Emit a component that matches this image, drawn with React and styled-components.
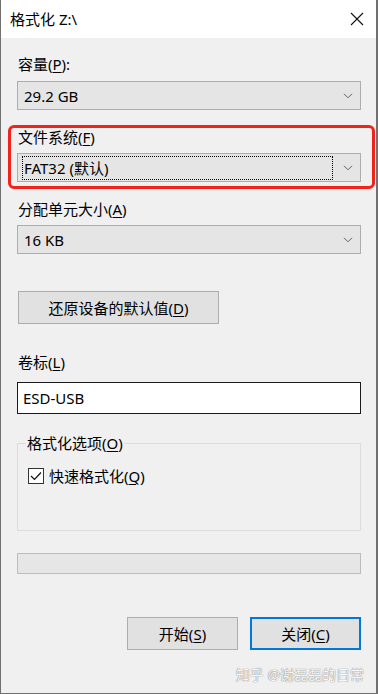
import React from "react";
import styled, { createGlobalStyle } from "styled-components";

const Global = createGlobalStyle`
  html, body { margin: 0; padding: 0; background: #f0f0f0; }
  body { font-family: "Noto Sans", "Noto Sans CJK SC", sans-serif; }
  * { box-sizing: border-box; }
`;

const Window = styled.div`
  width: 378px;
  height: 694px;
  display: flex;
  flex-direction: column;
  background: #f0f0f0;
  border-left: 1px solid #707070;
  border-right: 2px solid #707070;
  border-bottom: 1px solid #707070;
  color: #000;
  font-size: 15px;
  position: relative;
  overflow: hidden;
`;

const TitleBar = styled.div`
  height: 38px;
  flex: none;
  background: #fff;
  display: flex;
  align-items: center;
  justify-content: space-between;
  padding: 0 12px 0 9px;
`;

const Title = styled.div`
  font-size: 15px;
  line-height: 20px;
  margin-top: -1px;
`;

const CloseIcon = styled.svg`
  width: 14px;
  height: 14px;
  margin-top: 0px;
`;

const Body = styled.div`
  flex: 1;
  display: flex;
  flex-direction: column;
  padding: 0 15px 0 16px;
`;

const Label = styled.div`
  font-size: 15px;
  line-height: 20px;
  margin-top: ${(p) => p.$mt || 0}px;
  margin-left: ${(p) => p.$ml || 0}px;
`;

const U = styled.u`
  text-underline-offset: 2px;
  text-decoration-thickness: 1px;
`;

const Select = styled.div`
  margin-top: ${(p) => p.$mt || 0}px;
  height: 29px;
  background: #e5e5e5;
  border: 1px solid #adadad;
  display: flex;
  align-items: center;
  padding: 0 7px 0 4px;
  position: relative;
`;

const SelectText = styled.div`
  flex: 1;
  font-size: 15px;
  line-height: 20px;
  padding: 1px 0 1px 1px;
  height: 24px;
  display: flex;
  align-items: center;
  border: 1px dotted ${(p) => (p.$focus ? "#000" : "transparent")};
  margin-right: 10px;
`;

const Chevron = () => (
  <svg width="10" height="6" viewBox="0 0 10 6" style={{ flex: "none" }}>
    <polyline points="1,0.8 5,4.8 9,0.8" fill="none" stroke="#606060" strokeWidth="1" />
  </svg>
);

const Highlight = styled.div`
  position: relative;
  display: flex;
  flex-direction: column;
  margin-top: ${(p) => p.$mt || 0}px;
  &::after {
    content: "";
    position: absolute;
    left: -9px;
    right: -14px;
    top: -2px;
    bottom: -7px;
    border: 3px solid #f2231d;
    border-radius: 6px;
    pointer-events: none;
  }
`;

const Button = styled.button`
  font-family: inherit;
  font-size: 15px;
  color: #000;
  width: ${(p) => p.$w}px;
  height: 33px;
  background: #e1e1e1;
  border: ${(p) => (p.$default ? "2px solid #0078d7" : "1px solid #adadad")};
  padding: 0;
  margin: 0;
  line-height: 20px;
`;

const RestoreButton = styled(Button)`
  margin-top: 37px;
  margin-left: 1px;
  align-self: flex-start;
`;

const TextInput = styled.div`
  margin-top: 10px;
  height: 32px;
  background: #fff;
  border: 1px solid #1a1a1a;
  display: flex;
  align-items: center;
  padding: 0 5px;
  font-size: 15px;
`;

const GroupBox = styled.fieldset`
  margin: 19px 0 0 0;
  padding: 8px 10px 0 10px;
  height: 98px;
  border: 1px solid #dcdcdc;
  border-radius: 0;
  min-width: 0;
`;

const Legend = styled.legend`
  font-size: 15px;
  line-height: 20px;
  padding: 0 1px;
  margin-left: -2px;
`;

const CheckRow = styled.label`
  display: flex;
  align-items: center;
  gap: 5px;
  font-size: 15px;
  line-height: 20px;
  margin-top: 5px;
`;

const CheckBox = styled.span`
  width: 16px;
  height: 16px;
  border: 1px solid #333;
  background: #fff;
  display: flex;
  align-items: center;
  justify-content: center;
`;

const Progress = styled.div`
  margin-top: 22px;
  height: 21px;
  background: #e6e6e6;
  border: 1px solid #bcbcbc;
`;

const ButtonRow = styled.div`
  display: flex;
  justify-content: flex-end;
  gap: 12px;
  margin-top: 43px;
`;

const Watermark = styled.div`
  align-self: flex-end;
  margin-top: 16px;
  margin-right: -3px;
  font-size: 14px;
  line-height: 18px;
  color: #f6f6f6;
  text-shadow: 0 0 1px #8a8a8a, 0 0 1px #8a8a8a;
`;

export default function App() {
  return (
    <>
      <Global />
      <Window>
        <TitleBar>
          <Title>格式化 Z:\</Title>
          <CloseIcon viewBox="0 0 14 14">
            <path d="M1 1 L13 13 M13 1 L1 13" stroke="#111" strokeWidth="1.1" />
          </CloseIcon>
        </TitleBar>
        <Body>
          <Label $mt={16} $ml={1}>
            容量(<U>P</U>):
          </Label>
          <Select $mt={7}>
            <SelectText>29.2 GB</SelectText>
            <Chevron />
          </Select>

          <Highlight $mt={17}>
            <Label $ml={1}>
              文件系统(<U>F</U>)
            </Label>
            <Select $mt={6}>
              <SelectText $focus>FAT32 (默认)</SelectText>
              <Chevron />
            </Select>
          </Highlight>

          <Label $mt={17} $ml={1}>
            分配单元大小(<U>A</U>)
          </Label>
          <Select $mt={6}>
            <SelectText>16 KB</SelectText>
            <Chevron />
          </Select>

          <RestoreButton $w={201}>
            还原设备的默认值(<U>D</U>)
          </RestoreButton>

          <Label $mt={28} $ml={1}>
            卷标(<U>L</U>)
          </Label>
          <TextInput>ESD-USB</TextInput>

          <GroupBox>
            <Legend>
              格式化选项(<U>O</U>)
            </Legend>
            <CheckRow>
              <CheckBox>
                <svg width="12" height="10" viewBox="0 0 12 10">
                  <polyline points="1,5 4.5,8.5 11,1.5" fill="none" stroke="#111" strokeWidth="1.2" />
                </svg>
              </CheckBox>
              <span>
                快速格式化(<U>Q</U>)
              </span>
            </CheckRow>
          </GroupBox>

          <Progress />

          <ButtonRow>
            <Button $w={111}>
              开始(<U>S</U>)
            </Button>
            <Button $w={111} $default>
              关闭(<U>C</U>)
            </Button>
          </ButtonRow>

          <Watermark>知乎 @谢磊磊的日常</Watermark>
        </Body>
      </Window>
    </>
  );
}
